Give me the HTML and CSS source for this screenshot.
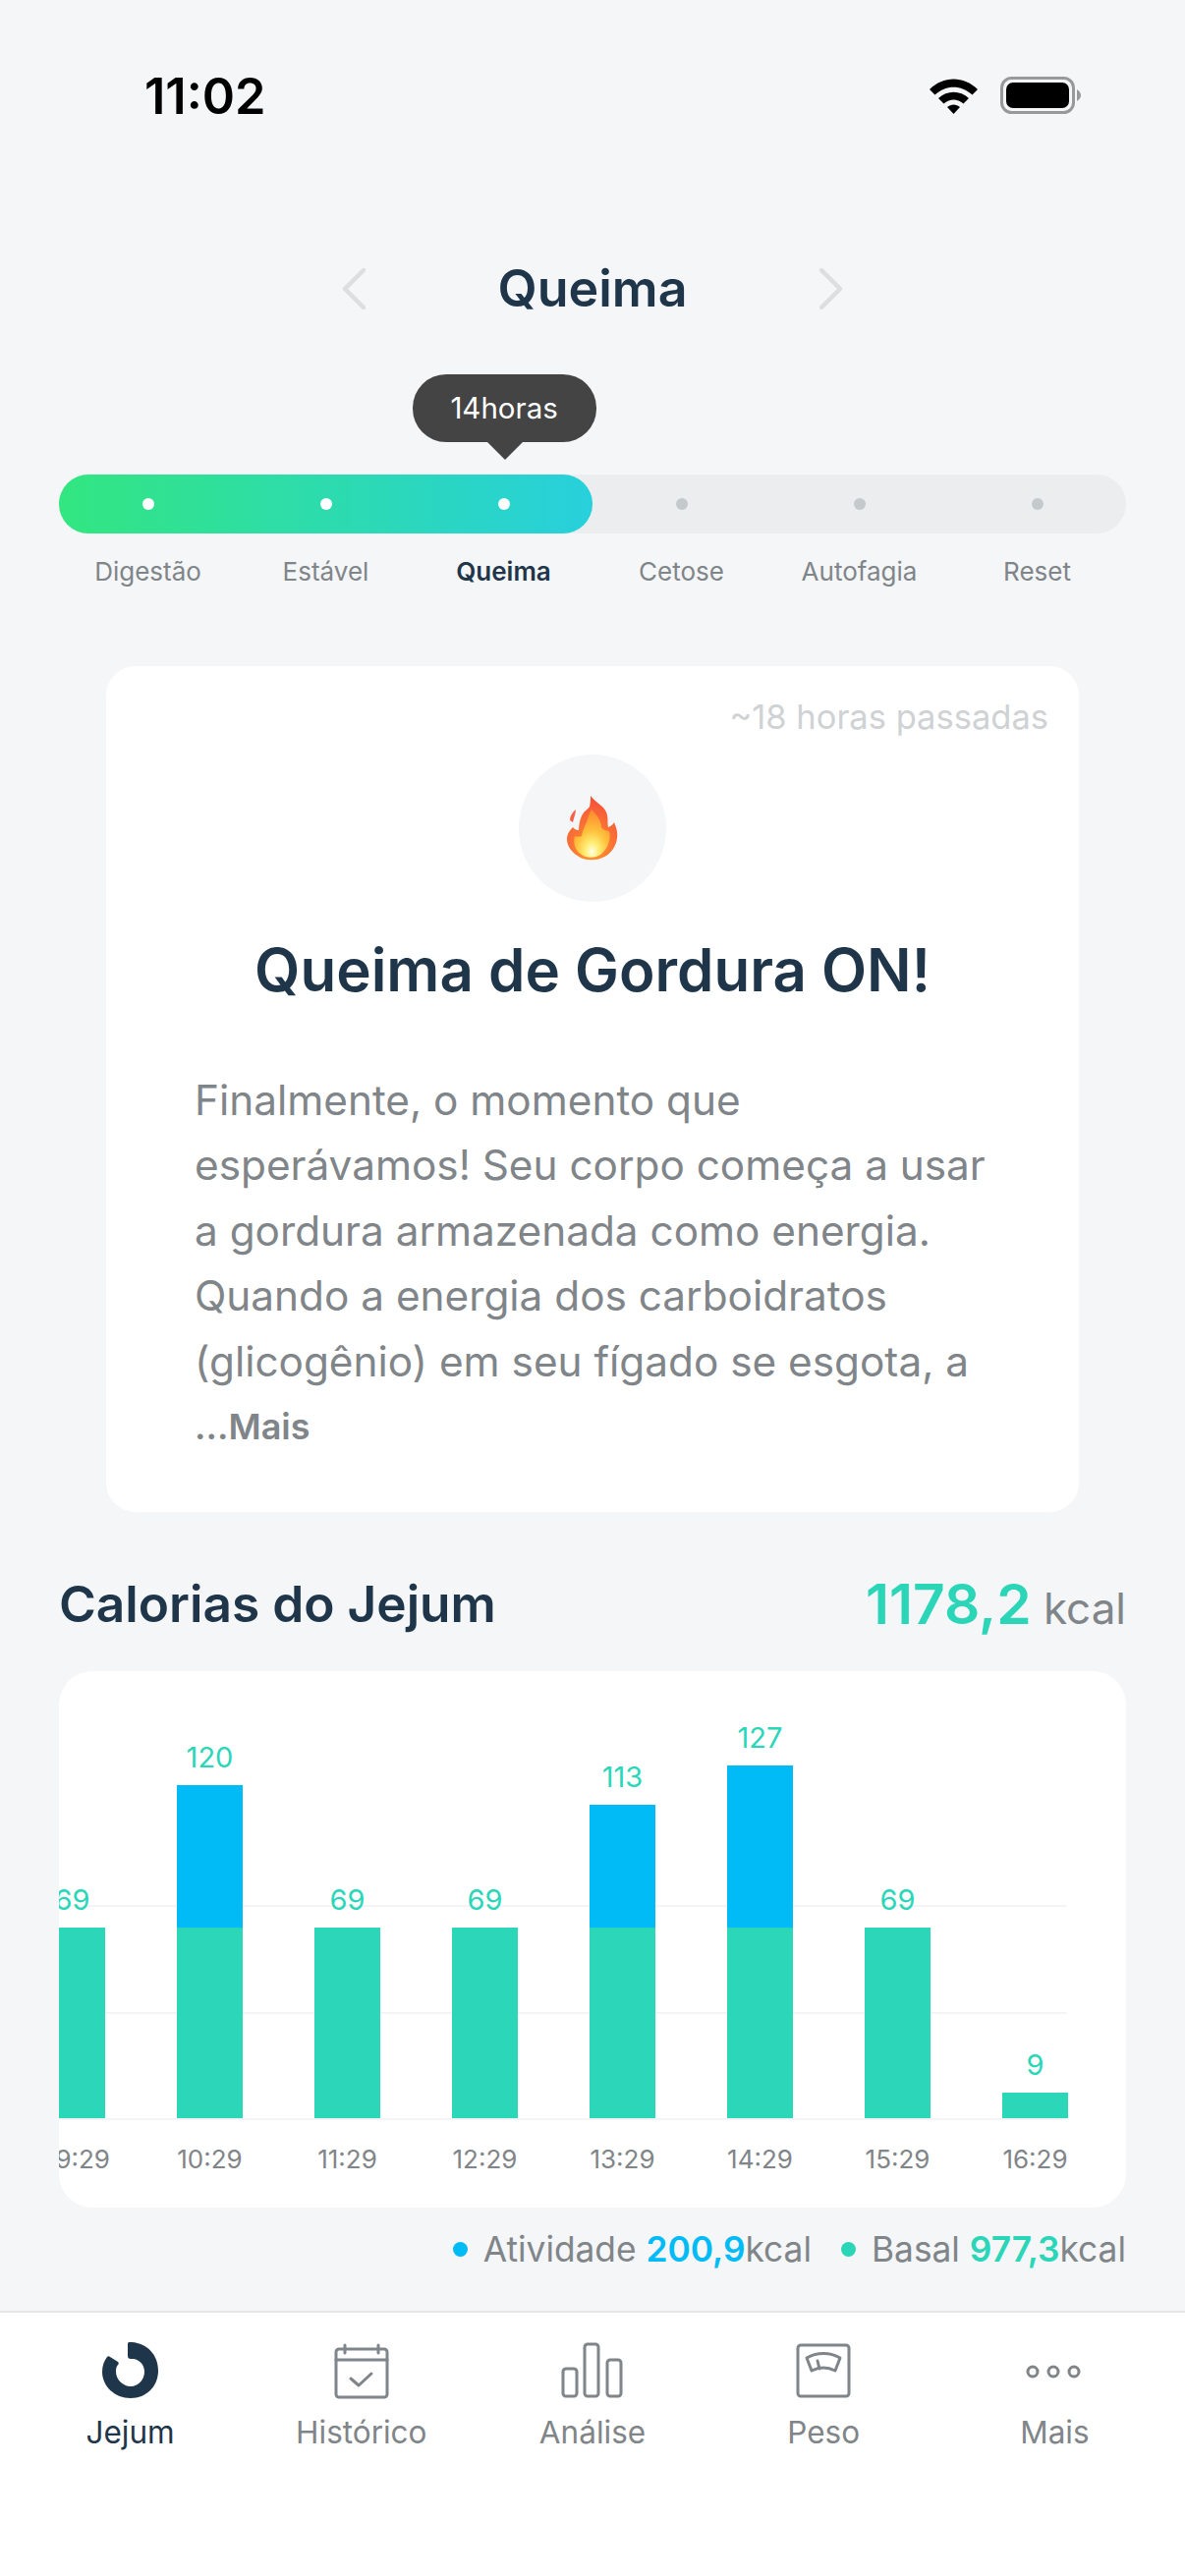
FILE: index.html
```html
<!DOCTYPE html>
<html lang="pt">
<head>
    <meta charset="UTF-8">
    <title>Jejum</title>
    <link rel="stylesheet" href="styles.css">
</head>
<body>
    <div class="status">
        <span class="status-time">11:02</span>
        <div class="status-icons">
            <svg width="49" height="38" viewBox="0 0 49 38"><path d="M0 13 C14 -1 35 -1 49 13 L43.5 18.5 C32 8 17 8 5.5 18.5Z" fill="#000"/><path d="M9 22 C18 13.500 31 13.500 40 22 L34.500 27.500 C28 22 21 22 14.500 27.500Z" fill="#000"/><path d="M18 31 C22 27.500 27 27.500 31 31 L24.500 38Z" fill="#000"/></svg>
            <svg width="82" height="38" viewBox="0 0 82 38"><rect x="1.500" y="1.500" width="73" height="35" rx="10" fill="none" stroke="#999" stroke-width="3"/><rect x="6" y="6" width="64" height="26" rx="7" fill="#000"/><path d="M78 13 C81 15 82 17 82 19 C82 21 81 23 78 25Z" fill="#999"/></svg>
        </div>
    </div>

    <div class="stage-title">
        <svg width="24" height="42" viewBox="0 0 24 42"><path d="M22 2 L3 21 L22 40" fill="none" stroke="#dcdedf" stroke-width="4.500" stroke-linecap="round" stroke-linejoin="round"/></svg>
        <h1>Queima</h1>
        <svg width="24" height="42" viewBox="0 0 24 42"><path d="M2 2 L21 21 L2 40" fill="none" stroke="#dcdedf" stroke-width="4.500" stroke-linecap="round" stroke-linejoin="round"/></svg>
    </div>

    <div class="progress">
        <div class="bubble-row">
            <div class="bubble">14horas</div>
        </div>
        <div class="track">
            <div class="track-fill"></div>
            <div class="track-dots">
                <i class="on"></i><i class="on"></i><i class="on"></i><i></i><i></i><i></i>
            </div>
        </div>
        <ul class="stages">
            <li>Digestão</li>
            <li>Estável</li>
            <li class="current">Queima</li>
            <li>Cetose</li>
            <li>Autofagia</li>
            <li>Reset</li>
        </ul>
    </div>

    <div class="info-card">
        <p class="passed">~18 horas passadas</p>
        <div class="flame-circle">
            <svg width="52" height="66" viewBox="0 0 52 66">
                <defs>
                    <radialGradient id="flameOuter" cx="50%" cy="85%" r="80%">
                        <stop offset="0" stop-color="#ff9a2e"/>
                        <stop offset="1" stop-color="#f4513a"/>
                    </radialGradient>
                    <radialGradient id="flameInner" cx="50%" cy="88%" r="80%">
                        <stop offset="0" stop-color="#fffde8"/>
                        <stop offset="0.22" stop-color="#fff07a"/>
                        <stop offset="0.55" stop-color="#ffc23d"/>
                        <stop offset="1" stop-color="#ff8f30"/>
                    </radialGradient>
                </defs>
                <path d="M24 0 C30 8 40 11 41 20 C42 25 41 29 42 32 C45 31 47 29 48 27 C50 32 52 37 51 43 C50 52 44 60 36 63 C30 66 20 66 14 63 C6 59 0 52 0 44 C0 39 3 35 6 32 C7 33 9 35 12 35 C12 28 14 20 18 16 C20 14 22 13 23 11 C24 7 24 3 24 0Z" fill="url(#flameOuter)"/>
                <path d="M9 14 C5 17 3 21 3 25 L6 27 C7 22 9 18 9 14Z" fill="#f4604a"/>
                <path d="M25 14 C31 20 35 26 35 32 C37 35 41 36 43 36 C45 44 42 54 34 60 C30 63 20 64 15 60 C8 56 6 48 8 41 C10 42 12 42 15 41 C16 33 21 27 22 20 C23 18 24 16 25 14Z" fill="url(#flameInner)"/>
            </svg>
        </div>
        <h2>Queima de Gordura ON!</h2>
        <p class="info-text">Finalmente, o momento que esperávamos! Seu corpo começa a usar a gordura armazenada como energia. Quando a energia dos carboidratos (glicogênio) em seu fígado se esgota, a</p>
        <p class="info-more">...Mais</p>
    </div>

    <div class="cal-head">
        <h3>Calorias do Jejum</h3>
        <p class="cal-total"><b>1178,2</b> kcal</p>
    </div>

    <div class="chart-card">
        <div class="plot">
            <div class="grid-line grid-a"></div>
            <div class="grid-line grid-b"></div>
            <div class="grid-line grid-c"></div>
            <div class="bars">
                <div class="col"><span>69</span><div class="seg basal" style="height:194px"></div></div>
                <div class="col"><span>120</span><div class="seg active" style="height:145px"></div><div class="seg basal" style="height:194px"></div></div>
                <div class="col"><span>69</span><div class="seg basal" style="height:194px"></div></div>
                <div class="col"><span>69</span><div class="seg basal" style="height:194px"></div></div>
                <div class="col"><span>113</span><div class="seg active" style="height:125px"></div><div class="seg basal" style="height:194px"></div></div>
                <div class="col"><span>127</span><div class="seg active" style="height:165px"></div><div class="seg basal" style="height:194px"></div></div>
                <div class="col"><span>69</span><div class="seg basal" style="height:194px"></div></div>
                <div class="col"><span>9</span><div class="seg basal" style="height:26px"></div></div>
            </div>
        </div>
        <div class="axis">
            <span>09:29</span><span>10:29</span><span>11:29</span><span>12:29</span><span>13:29</span><span>14:29</span><span>15:29</span><span>16:29</span>
        </div>
    </div>

    <div class="legend">
        <i class="dot dot-blue"></i><span>Atividade <b class="blue">200,9</b>kcal</span>
        <i class="dot dot-green"></i><span>Basal <b class="green">977,3</b>kcal</span>
    </div>

    <nav class="tabbar">
        <a class="tab tab-on" href="javascript:;">
            <svg width="58" height="58" viewBox="0 0 58 58"><path d="M26 2 C26 0 28 -1 30 0 C46 1 57 13 57 29 C57 45 45 57 29 57 C13 57 0 45 0 30 C0 24 2 19 5 15 C6 14 7 14 8 15 L16 20 C17 21 17 22 16 23 C14 25 14 28 14 30 C14 38 21 45 29 45 C37 45 43 38 43 30 C43 23 38 18 32 17 L29 17 C27 17 26 16 26 14Z" fill="#1f3549"/></svg>
            <span>Jejum</span>
        </a>
        <a class="tab" href="javascript:;">
            <svg width="58" height="58" viewBox="0 0 58 58" fill="none" stroke="#7f8589" stroke-width="3" stroke-linecap="round" stroke-linejoin="round"><rect x="3" y="7" width="52" height="49" rx="3"/><path d="M3 18 H55 M12 3 V11 M46 3 V11 M18 37 L26 44 L39 32"/></svg>
            <span>Histórico</span>
        </a>
        <a class="tab" href="javascript:;">
            <svg width="64" height="58" viewBox="0 0 64 58" fill="none" stroke="#7f8589" stroke-width="3"><rect x="2" y="27" width="14" height="28" rx="3"/><rect x="24" y="2" width="14" height="53" rx="3"/><rect x="47" y="18" width="14" height="37" rx="3"/></svg>
            <span>Análise</span>
        </a>
        <a class="tab" href="javascript:;">
            <svg width="58" height="58" viewBox="0 0 58 58" fill="none" stroke="#7f8589" stroke-width="3" stroke-linejoin="round" stroke-linecap="round"><rect x="3" y="3" width="52" height="52" rx="3"/><path d="M12 16 C22 10 36 10 46 16 L41 29 C33 25 25 25 17 29Z M23 19 L25 27"/></svg>
            <span>Peso</span>
        </a>
        <a class="tab" href="javascript:;">
            <svg width="58" height="58" viewBox="0 0 58 58" fill="none" stroke="#7f8589" stroke-width="3"><circle cx="7" cy="30" r="5"/><circle cx="28" cy="30" r="5"/><circle cx="49" cy="30" r="5"/></svg>
            <span>Mais</span>
        </a>
    </nav>
</body>
</html>
```

FILE: styles.css
```css
*{box-sizing: border-box;}
html,body{margin: 0;padding: 0;}
body{display: flex;flex-direction: column;width: 1206px;height: 2622px;overflow: hidden;background-color: #f5f6f8;font-family: Inter, "Liberation Sans", sans-serif;color: #7f8589;}
h1,h2,h3,p,ul,li{margin: 0;padding: 0;list-style: none;}
svg{display: block;}

.status{display: flex;justify-content: space-between;align-items: center;height: 194px;padding: 0 106px 0 147px;}
.status-time{font-size: 50.5px;font-weight: 600;color: #000;}
.status-icons{display: flex;gap: 23px;}

.stage-title{display: flex;justify-content: space-between;align-items: center;width: 510px;height: 54px;margin: 73px auto 60px;}
.stage-title h1{font-size: 52px;line-height: 54px;font-weight: 600;color: #1f3549;}

.progress{padding: 0 60px;}
.bubble-row{display: grid;grid-template-columns: repeat(6,1fr);height: 102px;}
.bubble{grid-column: 3;justify-self: center;position: relative;width: 187px;height: 69px;border-radius: 34px;background-color: #444;color: #fff;font-size: 29.5px;line-height: 69px;text-align: center;}
.bubble:after{content: "";position: absolute;left: 76px;top: 69px;border-style: solid;border-width: 18px 18px 0;border-color: #444 transparent transparent;}
.track{position: relative;height: 60px;border-radius: 30px;background-color: #ebedef;}
.track-fill{position: absolute;left: 0;top: 0;width: 543px;height: 60px;border-radius: 30px;background: linear-gradient(90deg,#32e680,#27d0dc);}
.track-dots{position: relative;display: grid;grid-template-columns: repeat(6,1fr);align-items: center;justify-items: center;height: 60px;}
.track-dots i{width: 12px;height: 12px;border-radius: 50%;background-color: #c4c9cc;}
.track-dots i.on{background-color: #fff;}
.stages{display: grid;grid-template-columns: repeat(6,1fr);margin-top: 24px;}
.stages li{font-size: 26px;line-height: 30px;text-align: center;}
.stages .current{font-weight: 600;color: #1f3549;}

.info-card{height: 861px;margin: 81px 108px 0;padding: 32px 31px 0 90px;background-color: #fff;border-radius: 30px;}
.passed{font-size: 34.5px;line-height: 40px;text-align: right;color: #cfd2d4;}
.flame-circle{display: flex;align-items: center;justify-content: center;width: 150px;height: 150px;margin: 18px 0 0 330px;border-radius: 50%;background-color: #f5f6f8;}
.info-card h2{width: 990px;margin: 34px 0 1px -90px;font-size: 60px;line-height: 70px;font-weight: 600;text-align: center;color: #1f3549;}
.info-text{margin-top: 65px;width: 820px;font-size: 42.3px;line-height: 66.4px;}
.info-more{font-size: 36px;line-height: 66.4px;font-weight: 600;}

.cal-head{display: flex;justify-content: space-between;align-items: center;height: 70px;margin: 58px 60px 0;}
.cal-head h3{font-size: 51.4px;font-weight: 600;color: #1f3549;}
.cal-total{font-size: 44px;}
.cal-total b{font-size: 56.8px;font-weight: 600;color: #2bd6b8;}

.chart-card{height: 546px;margin: 34px 60px 0;overflow: hidden;background-color: #fff;border-radius: 34px;}
.plot{position: relative;height: 455px;}
.grid-line{position: absolute;left: 0;width: 1026px;height: 2px;background-color: #f3f4f5;}
.grid-a{top: 238px;}
.grid-b{top: 347px;}
.grid-c{top: 455px;}
.bars{position: relative;display: flex;align-items: flex-end;gap: 73px;height: 455px;margin-left: -20px;}
.col{display: flex;flex-direction: column;align-items: center;width: 67px;}
.col span{margin-bottom: 11px;font-size: 29px;line-height: 34px;color: #2bd6b8;}
.seg{width: 67px;}
.basal{background-color: #2cd6b8;}
.active{background-color: #00bbf5;}
.axis{display: flex;gap: 73px;margin: 25px 0 0 -20px;}
.axis span{flex: none;width: 67px;font-size: 26px;line-height: 34px;text-align: center;white-space: nowrap;}

.legend{display: flex;justify-content: flex-end;align-items: center;height: 44px;margin: 20px 60px 0;font-size: 35.3px;}
.legend b{font-weight: 600;}
.dot{width: 15px;height: 15px;margin-right: 16px;border-radius: 50%;}
.dot-blue{background-color: #00bbf5;}
.dot-green{margin-left: 30px;background-color: #2bd6b8;}
.blue{color: #00bbf5;}
.green{color: #2bd6b8;}

.tabbar{display: flex;height: 270px;margin-top: auto;padding: 30px 15px 0;background-color: #fff;border-top: 2px solid #e4e6e8;}
.tab{display: flex;flex: 1;flex-direction: column;align-items: center;text-decoration: none;font-size: 31.5px;color: #7f8589;}
.tab span{margin-top: 14px;line-height: 40px;}
.tab-on{color: #1f3549;}
```
